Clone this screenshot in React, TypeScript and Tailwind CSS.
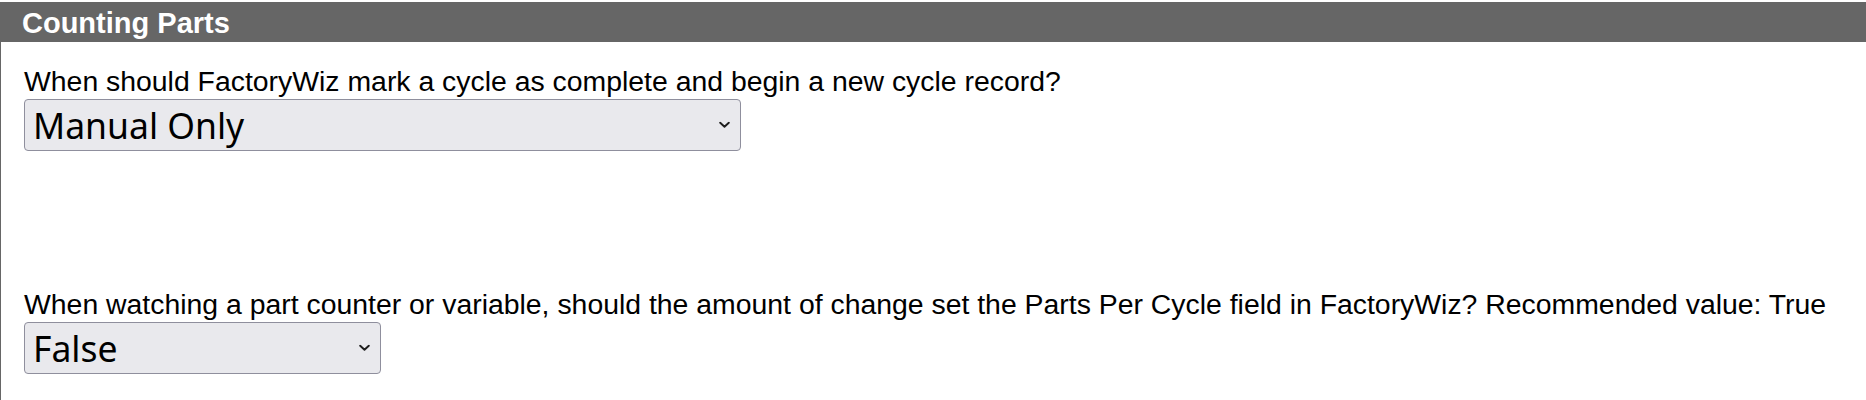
import React from "react";

function Chevron() {
  return (
    <svg width="11" height="7" viewBox="0 0 11 7" className="absolute right-[10px] top-1/2 -translate-y-1/2 pointer-events-none">
      <path d="M1.2 1.2 L5.5 5.3 L9.8 1.2" fill="none" stroke="#1f1f1f" strokeWidth="1.9" strokeLinecap="round" strokeLinejoin="round" />
    </svg>
  );
}

function FakeSelect({ value, widthClass }: { value: string; widthClass: string }) {
  return (
    <div className={`relative ${widthClass} h-[52px] mt-[2px] rounded-[4px] border border-[#8f8f9d] bg-[#e9e9ed]`}>
      <div className="pl-[8px] text-[35.5px] leading-[50px] text-black font-['Noto_Sans','Open_Sans',sans-serif] whitespace-nowrap">
        {value}
      </div>
      <Chevron />
    </div>
  );
}

export default function App() {
  return (
    <div className="bg-white w-[1866px] h-[400px] overflow-hidden pt-[2px] font-['Liberation_Sans',Arial,sans-serif]">
      <div className="h-10 bg-[#666666] pl-[22px] pt-[2px] text-[29px] leading-[38px] font-bold text-white whitespace-nowrap">
        Counting Parts
      </div>
      <div className="border-l border-[#666666] pl-[23px] pt-[23px] h-[358px]">
        <div className="text-[28.4px] leading-[32px] text-black whitespace-nowrap">
          When should FactoryWiz mark a cycle as complete and begin a new cycle record?
        </div>
        <FakeSelect value="Manual Only" widthClass="w-[717px]" />
        <div className="h-[137px]" />
        <div className="text-[28.4px] leading-[32px] text-black whitespace-nowrap">
          When watching a part counter or variable, should the amount of change set the Parts Per Cycle field in FactoryWiz? Recommended value: True
        </div>
        <FakeSelect value="False" widthClass="w-[357px]" />
      </div>
    </div>
  );
}
